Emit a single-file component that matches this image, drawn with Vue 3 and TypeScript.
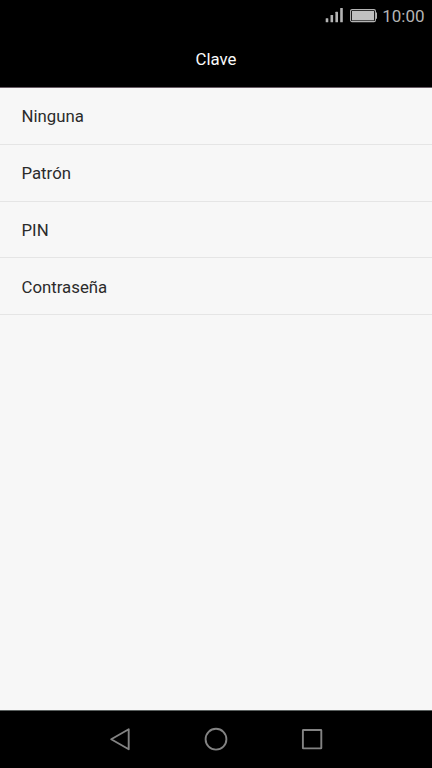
<script setup lang="ts">
const title: string = 'Clave'
const options: string[] = ['Ninguna', 'Patrón', 'PIN', 'Contraseña']
</script>

<template>
  <div class="screen">
    <div class="status-bar">
      <svg class="signal" width="18" height="16" viewBox="0 0 18 16" fill="#b4b4b4">
        <rect x="0.7" y="10.3" width="2.6" height="4" rx="0.5" />
        <rect x="5.5" y="7" width="2.6" height="7.3" rx="0.5" />
        <rect x="10.4" y="3.7" width="2.6" height="10.6" rx="0.5" />
        <rect x="15.2" y="0" width="2.6" height="14.3" rx="0.5" />
      </svg>
      <svg class="battery" width="28" height="14" viewBox="0 0 28 14">
        <rect x="0.6" y="0.6" width="24.8" height="12" rx="1.4" fill="none" stroke="#b4b4b4" stroke-width="1.1" />
        <rect x="2" y="2" width="22" height="9.4" fill="#c0c0c0" />
        <path d="M26 3.5h1v6.2h-1z" fill="#b4b4b4" />
      </svg>
      <span class="clock">10:00</span>
    </div>
    <header class="title-bar">
      <h1 class="title">{{ title }}</h1>
    </header>
    <ul class="options">
      <li v-for="option in options" :key="option" class="option">{{ option }}</li>
    </ul>
    <nav class="nav-bar">
      <svg width="24" height="24" viewBox="0 0 24 24">
        <path d="M3.2 12.2 20.7 2.2V22.2Z" />
      </svg>
      <svg width="24" height="24" viewBox="0 0 24 24">
        <circle cx="12" cy="12.2" r="10.4" />
      </svg>
      <svg width="24" height="24" viewBox="0 0 24 24">
        <rect x="2.9" y="3" width="18.4" height="18.4" rx="0.4" />
      </svg>
    </nav>
  </div>
</template>

<style>
body {
  background: #000;
}
</style>

<style scoped>
.screen {
  display: flex;
  flex-direction: column;
  width: 432px;
  height: 768px;
  background: #f7f7f7;
  font-family: Roboto, 'Liberation Sans', sans-serif;
  overflow: hidden;
}
.status-bar {
  display: flex;
  flex: none;
  align-items: flex-start;
  justify-content: flex-end;
  height: 32px;
  padding-right: 7.5px;
  box-sizing: border-box;
  background: #000;
}
.signal {
  margin: 8px 7px 0 0;
}
.battery {
  margin: 9px 4.5px 0 0;
}
.clock {
  margin-top: 6px;
  color: #b4b4b4;
  font-size: 17px;
  line-height: 20px;
}
.title-bar {
  display: flex;
  flex: none;
  align-items: center;
  justify-content: center;
  height: 56px;
  padding-bottom: 2px;
  box-sizing: border-box;
  border-bottom: 1px solid #685c65;
  background: #000;
}
.title {
  margin: 0;
  color: #fafafa;
  font-size: 16.8px;
  font-weight: 400;
  line-height: 20px;
}
.options {
  flex: 1;
  margin: 0;
  padding: 0;
  list-style: none;
}
.option {
  display: flex;
  align-items: center;
  height: 56.75px;
  padding: 0.8px 0 0 21.5px;
  box-sizing: border-box;
  border-bottom: 1px solid #e5e5e5;
  color: #2b2b2b;
  font-size: 16.8px;
  line-height: 20px;
}
.nav-bar {
  display: flex;
  flex: none;
  justify-content: center;
  gap: 72px;
  height: 58px;
  padding-top: 16px;
  box-sizing: border-box;
  border-top: 1px solid #5b605f;
  background: #000;
}
.nav-bar svg {
  fill: none;
  stroke: #838383;
  stroke-width: 1.9;
  stroke-linejoin: round;
}
</style>
